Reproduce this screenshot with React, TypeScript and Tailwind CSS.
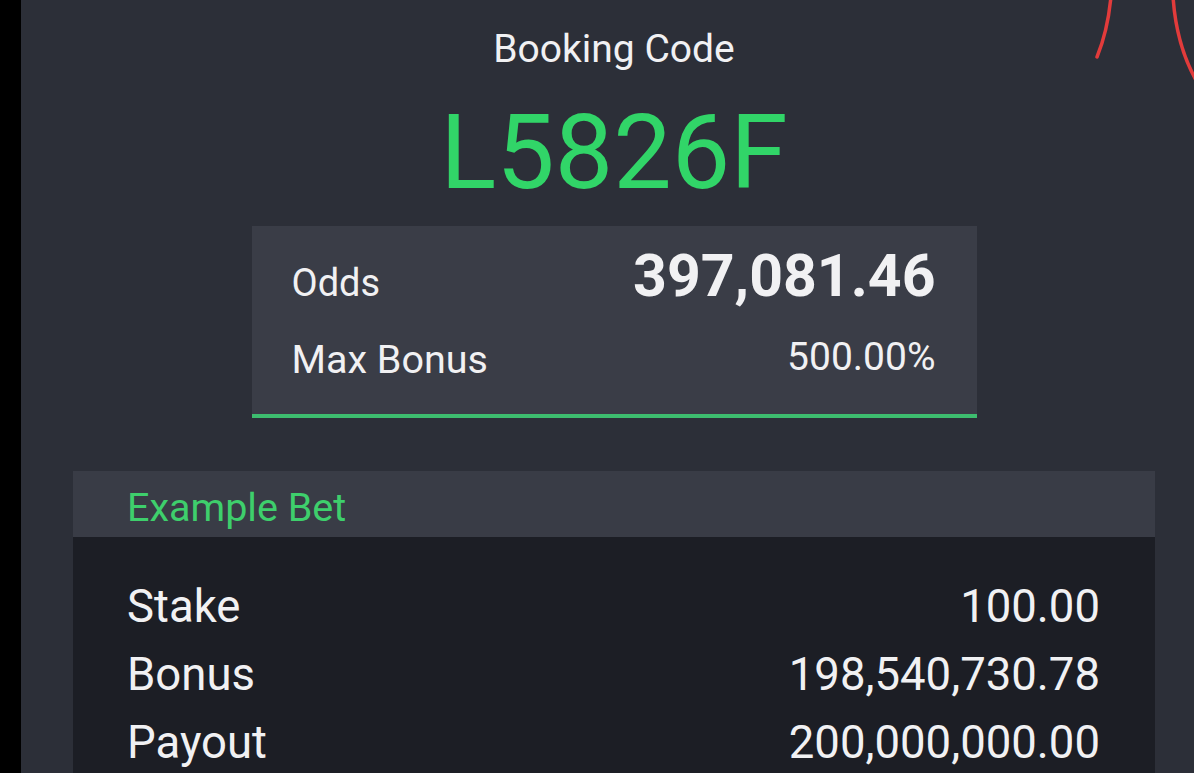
import React from "react";

const rows = [
  { label: "Stake", value: "100.00" },
  { label: "Bonus", value: "198,540,730.78" },
  { label: "Payout", value: "200,000,000.00" },
];

export default function App() {
  return (
    <div
      className="relative flex h-[773px] w-full overflow-hidden bg-[#2c2f38] text-[#f1f1f3]"
      style={{ fontFamily: "Roboto, 'Noto Sans', Arial, sans-serif" }}
    >
      <div className="w-[21px] shrink-0 bg-black" />
      <div className="flex flex-1 flex-col items-stretch pl-[52px] pr-[39px]">
        <div className="flex flex-col items-center">
          <div className="pt-[26px] text-[39px] leading-[46px]">Booking Code</div>
          <div className="mt-[31px] text-[104px] leading-[100px] text-[#31d568]">L5826F</div>
          <div className="mt-[23px] w-[725px] border-b-[4px] border-[#3dbd6f] bg-[#3a3d47] pl-[40px] pr-[41px] pt-[14px] pb-[31px]">
            <div className="flex items-baseline justify-between">
              <span className="text-[38px] leading-[72px]">Odds</span>
              <span className="text-[59px] font-bold leading-[72px]">397,081.46</span>
            </div>
            <div className="mt-[18px] flex items-start justify-between">
              <span className="text-[39.5px] leading-[46px]">Max Bonus</span>
              <span className="text-[39px] leading-[40px]">500.00%</span>
            </div>
          </div>
        </div>
        <div className="mt-[53px] flex flex-1 flex-col">
          <div className="h-[66px] bg-[#393c46] pl-[54px] pt-[14px] text-[39.5px] leading-[46px] text-[#3ecf6c]">
            Example Bet
          </div>
          <div className="flex-1 bg-[#1c1e25] pl-[54px] pr-[55px] pt-[36px]">
            {rows.map((r) => (
              <div key={r.label} className="flex justify-between text-[45.5px] leading-[68px]">
                <span>{r.label}</span>
                <span>{r.value}</span>
              </div>
            ))}
          </div>
        </div>
      </div>
      <svg
        className="pointer-events-none absolute left-0 top-0"
        width="1194"
        height="773"
        viewBox="0 0 1194 773"
      >
        <path d="M1111 -4 Q1108 30 1097 57" fill="none" stroke="#e23b3b" strokeWidth="3.5" strokeLinecap="round" />
        <path d="M1173 -4 Q1176 45 1197 82" fill="none" stroke="#e23b3b" strokeWidth="3.5" strokeLinecap="round" />
      </svg>
    </div>
  );
}
